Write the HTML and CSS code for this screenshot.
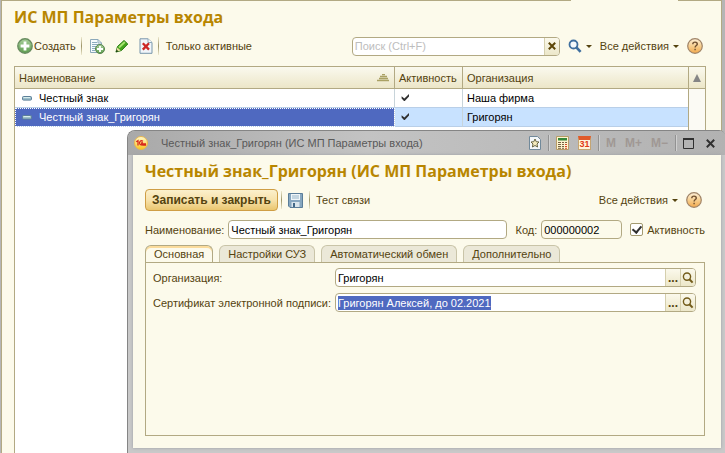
FILE: index.html
```
<!DOCTYPE html>
<html lang="ru">
<head>
<meta charset="utf-8">
<title>ИС МП Параметры входа</title>
<link rel="stylesheet" href="styles.css">
</head>
<body>
<svg class="defs" aria-hidden="true">
  <defs>
    <linearGradient id="orange" x1="0" y1="0" x2="0" y2="1"><stop offset="0" stop-color="#fdf0d8"/><stop offset=".5" stop-color="#f7cf90"/><stop offset="1" stop-color="#f3a94c"/></linearGradient>
    <linearGradient id="green" x1="0" y1="0" x2="0" y2="1"><stop offset="0" stop-color="#a9cf9c"/><stop offset="1" stop-color="#5d9e4e"/></linearGradient>
    <linearGradient id="gold" x1="0" y1="0" x2="0" y2="1"><stop offset="0" stop-color="#fffbd0"/><stop offset="1" stop-color="#f9c41c"/></linearGradient>
    <symbol id="help" viewBox="0 0 16 16"><circle cx="8" cy="8" r="7.3" fill="url(#orange)" stroke="#a08468" stroke-width="1.2"/><path d="M5.8 6.2C5.8 3.4 10.4 3.5 10.3 6.1C10.2 7.6 8.1 7.6 8.1 9.6M8.1 10.8V12.3" fill="none" stroke="#705030" stroke-width="1.4"/></symbol>
    <symbol id="check" viewBox="0 0 9 9"><path d="M.6 3.2L3.4 5.6L8 1V3.6L3.8 8H3L.6 5.6Z" fill="#303030"/></symbol>
    <symbol id="dash" viewBox="0 0 10 5"><rect x=".5" y=".5" width="9" height="3.6" rx="1" fill="#9dbfca" stroke="#5c7f98"/><path d="M1.5 1.5H8" stroke="#d7ecec"/></symbol>
    <symbol id="lens" viewBox="0 0 12 12"><circle cx="5" cy="4.6" r="3.6" fill="none" stroke="#735c1a" stroke-width="1.4"/><path d="M7.4 7.2L10.6 10.6" stroke="#735c1a" stroke-width="2"/></symbol>
  </defs>
</svg>
<main class="sheet">
  <h1>ИС МП Параметры входа</h1>
  <div class="toolbar">
    <button class="tool create"><svg width="16" height="16" viewBox="0 0 16 16"><circle cx="8" cy="8" r="7.2" fill="url(#green)" stroke="#698d60" stroke-width="1.4"/><path d="M8 3.6V12.4M3.6 8H12.4" stroke="#fff" stroke-width="2.8"/></svg>Создать</button>
    <i class="sep"></i>
    <button class="tool" aria-label="Скопировать"><svg width="16" height="16" viewBox="0 0 16 16"><path d="M1.5 1.5H9L12.5 5V14.5H1.5Z" fill="#f7fbfd" stroke="#8ca9ba"/><path d="M9 1.5V5H12.5" fill="none" stroke="#8ca9ba"/><path d="M3 4.5H8M3 6.5H10M3 8.5H9M3 10.5H7M3 12.5H6" stroke="#8cacc0"/><circle cx="11" cy="11" r="4.5" fill="url(#green)" stroke="#57824c"/><path d="M11 8V14M8 11H14" stroke="#fff" stroke-width="1.8"/></svg></button>
    <button class="tool" aria-label="Изменить"><svg width="14" height="14" viewBox="0 0 14 14"><path d="M1 13L2.5 7.5L9 1.5L12.8 5L6.5 11.5Z" fill="#44a51c" stroke="#287b14"/><path d="M4 8.5L9.8 3" stroke="#a7e46f" stroke-width="1.8"/><path d="M1 13L2.3 8.4L5.7 11.6Z" fill="#e4dc9c"/><path d="M.7 13.3L1.6 10.5L3.5 12.4Z" fill="#173f0c"/></svg></button>
    <button class="tool" aria-label="Удалить"><svg width="14" height="16" viewBox="0 0 14 16"><path d="M1 .8H9L13 4.5V15.3H1Z" fill="#f1f6fa" stroke="#7795ab"/><path d="M9 1V4.5H13" fill="#fff" stroke="#8ca9ba"/><path d="M3.8 5.2L10 11.6M10 5.2L3.8 11.6" stroke="#cc2826" stroke-width="2.3"/></svg></button>
    <i class="sep"></i>
    <button class="tool text">Только активные</button>
    <span class="grow"></span>
    <div class="field search"><input type="text" aria-label="Поиск" placeholder="Поиск (Ctrl+F)"><button class="infield" aria-label="Очистить"><svg width="8" height="8" viewBox="0 0 8 8"><path d="M.8 .8L7.2 7.2M7.2 .8L.8 7.2" stroke="#5d4608" stroke-width="2"/></svg></button></div>
    <button class="tool find" aria-label="Найти"><svg width="14" height="14" viewBox="0 0 14 14"><circle cx="5.5" cy="5.5" r="4" fill="#f5fafc" stroke="#3f6f9f" stroke-width="1.8"/><path d="M8.4 8.4L12.6 12.8" stroke="#3f6f9f" stroke-width="2.6"/></svg><i class="caret"></i></button>
    <button class="tool actions">Все действия<i class="caret"></i></button>
    <button class="tool help" aria-label="Справка"><svg width="16" height="16"><use href="#help"/></svg></button>
  </div>
  <div class="list">
    <table>
      <thead><tr><th class="name"><span>Наименование<svg width="13" height="8" viewBox="0 0 13 8"><path d="M5 .5H8M3 2.5H10M2 4.5H11M0 6.5H12" stroke="#aaa164" stroke-width="1.4"/></svg></span></th><th class="active">Активность</th><th class="org">Организация</th></tr></thead>
      <tbody>
        <tr><td class="item"><svg width="10" height="5"><use href="#dash"/></svg>Честный знак</td><td><svg width="9" height="9"><use href="#check"/></svg></td><td>Наша фирма</td></tr>
        <tr class="current"><td class="item"><svg width="10" height="5"><use href="#dash"/></svg>Честный знак_Григорян</td><td><svg width="9" height="9"><use href="#check"/></svg></td><td>Григорян</td></tr>
      </tbody>
    </table>
    <div class="scroll"><button aria-label="Вверх"><svg width="8" height="8" viewBox="0 0 8 8"><path d="M4 0L8 8H0Z" fill="#858585"/></svg></button></div>
  </div>
</main>

<section class="dialog" role="dialog" aria-labelledby="dialog-title">
  <header class="titlebar">
    <svg width="14" height="14" viewBox="0 0 14 14"><circle cx="7" cy="7" r="6.5" fill="url(#gold)" stroke="#e9b64d"/><path d="M2.2 5.8L4 4.7V9.6M9 5.2C6.5 3.8 4.8 6 5.9 8.1C6.7 9.3 8 9 12 9M8.8 6.9C7.7 6 7 7.8 8.2 7.8H12" fill="none" stroke="#d8271c" stroke-width="1.3"/></svg>
    <span class="caption">Честный знак_Григорян (ИС МП Параметры входа)</span>
    <button class="star" aria-label="В избранное"><svg width="12" height="14" viewBox="0 0 12 14"><path d="M.5 .5H8.5L11.5 3.5V13.5H.5Z" fill="#f4f7f9" stroke="#71899a"/><path d="M6 3L7.2 5.7L10 6L8 8L8.6 11L6 9.5L3.4 11L4 8L2 6L4.8 5.7Z" fill="#f5ebbd" stroke="#686544"/></svg></button>
    <i class="bar-sep"></i>
    <button aria-label="Калькулятор"><svg width="13" height="14" viewBox="0 0 13 14"><path d="M.5 .5H12.5V13.5H.5Z" fill="#fff4cf" stroke="#b79c67"/><path d="M2 2H11V4.5H2Z" fill="#36873a"/><path d="M2 6.5H5M6 6.5H8M9 6.5H11M2 8.5H5M6 8.5H8M2 10.5H5M6 10.5H8M2 12.3H5M6 12.3H8" stroke="#766344"/><path d="M9 8.5H11M9 10.5H11M9 12.3H11" stroke="#d74829"/></svg></button>
    <button aria-label="Календарь" class="calendar">31</button>
    <i class="bar-sep"></i>
    <span class="memory"><button disabled>M</button><button disabled>M+</button><button disabled>M−</button></span>
    <i class="bar-sep"></i>
    <button aria-label="Развернуть"><svg width="11" height="11" viewBox="0 0 11 11"><path d="M.5 1V10.5H10.5V1" fill="none" stroke="#303030"/><path d="M0 1H11" stroke="#303030" stroke-width="2"/></svg></button>
    <button class="close" aria-label="Закрыть"><svg width="9" height="9" viewBox="0 0 9 9"><path d="M.8 .8L8.2 8.2M8.2 .8L.8 8.2" stroke="#303030" stroke-width="2"/></svg></button>
  </header>
  <form class="form">
    <h2 id="dialog-title">Честный знак_Григорян (ИС МП Параметры входа)</h2>
    <div class="commands">
      <button type="button" class="primary">Записать и закрыть</button>
      <i class="sep"></i>
      <button type="button" class="tool" aria-label="Записать"><svg width="15" height="15" viewBox="0 0 15 15"><path d="M.5 .5H14.5V14.5H2L.5 13Z" fill="#86a6bf" stroke="#5a7d99"/><path d="M3 1H12V7H3Z" fill="#eff5f8"/><path d="M4 3H11M4 5H11" stroke="#98b5c7"/><path d="M3.5 9H11.5V14H3.5Z" fill="#d9e5ec"/><path d="M5 10H7V14H5Z" fill="#426887"/></svg></button>
      <i class="sep"></i>
      <button type="button" class="tool text">Тест связи</button>
      <span class="grow"></span>
      <button type="button" class="tool actions">Все действия<i class="caret"></i></button>
      <button type="button" class="tool help" aria-label="Справка"><svg width="16" height="16"><use href="#help"/></svg></button>
    </div>
    <div class="main-row">
      <label for="name">Наименование:</label>
      <div class="field grow"><input id="name" type="text" value="Честный знак_Григорян"></div>
      <label class="code-label" for="code">Код:</label>
      <div class="field code"><input id="code" type="text" value="000000002" readonly></div>
      <label class="tick"><input type="checkbox" checked>Активность</label>
    </div>
    <div class="tabs" role="tablist">
      <button type="button" role="tab" aria-selected="true">Основная</button>
      <button type="button" role="tab" aria-selected="false">Настройки СУЗ</button>
      <button type="button" role="tab" aria-selected="false">Автоматический обмен</button>
      <button type="button" role="tab" aria-selected="false">Дополнительно</button>
    </div>
    <div class="panel" role="tabpanel">
      <label for="org">Организация:</label>
      <div class="field"><input id="org" type="text" value="Григорян"><button type="button" class="infield dots" aria-label="Выбрать">...</button><button type="button" class="infield" aria-label="Открыть"><svg width="12" height="12"><use href="#lens"/></svg></button></div>
      <label for="cert">Сертификат электронной подписи:</label>
      <div class="field"><input id="cert" type="text" value="Григорян Алексей, до 02.2021"><button type="button" class="infield dots" aria-label="Выбрать">...</button><button type="button" class="infield" aria-label="Открыть"><svg width="12" height="12"><use href="#lens"/></svg></button></div>
    </div>
  </form>
</section>
<script src="script.js"></script>
</body>
</html>
```
FILE: styles.css
```
* { box-sizing: border-box; }
html, body { height: 100%; }
body {
  margin: 0;
  position: relative;
  overflow: hidden;
  background: #b5b5b5;
  padding: 0 3px 0 1px;
  font: 11px/14px "Liberation Sans", Arial, sans-serif;
  color: #54430f;
}
button, input { font: inherit; color: inherit; }
button { display: flex; align-items: center; background: none; border: 0; padding: 0; white-space: nowrap; }
svg { display: block; flex: none; }
.defs { position: absolute; width: 0; height: 0; }
.grow { flex: 1; min-width: 0; }

.sheet {
  position: relative;
  height: 100%;
  display: flex;
  flex-direction: column;
  background: #fcfaeb;
  border: 1px solid #b2a983;
  border-bottom: 0;
  padding: 0 15px 0 12px;
}
/* gap in the top edge under the open page tab */
.sheet::before { content: ""; position: absolute; top: -1px; right: 43px; width: 107px; height: 1px; background: #fcfaeb; }
h1, h2 {
  margin: 0;
  font: bold 16px/20px "Open Sans", "Noto Sans", sans-serif;
  color: #b88600;
  white-space: nowrap;
}
h1 { padding-top: 6px; }
.toolbar { display: flex; align-items: center; height: 18px; margin: 10px 0 11px; padding: 0 3px; }
.toolbar .create { gap: 1px; }
.sep { width: 1px; height: 18px; background: linear-gradient(#eee9cf, #9c9468, #eee9cf); margin: 0 7px 0 5px; }
.toolbar .tool + .tool { margin-left: 10px; }
.toolbar .tool + .actions, .toolbar .tool + .help { margin-left: 8px; }
.caret { width: 0; height: 0; border: 3px solid transparent; border-top-color: #54430f; border-bottom: 0; margin-left: 4px; }

.field {
  display: flex;
  height: 19px;
  border: 1px solid #b2a983;
  border-radius: 4px;
  background: #fff;
  overflow: hidden;
}
.field input { flex: 1; min-width: 0; width: 0; border: 0; padding: 0 2px; background: none; outline: 0; color: #000; }
.field input::placeholder { color: #bdbdbd; opacity: 1; }
.field input::selection { background: #4f69c0; color: #fff; }
.search { width: 208px; margin-right: 8px; }
.infield { width: 15px; justify-content: center; border-left: 1px solid #d5cfad; background: linear-gradient(#fbf9ec, #ece7c9); }
.dots { font-size: 12px; font-weight: bold; }

.list { flex: 1; display: flex; border: 1px solid #b2a983; border-bottom: 0; background: #fff; }
table { flex: 1; width: 100%; align-self: flex-start; border-collapse: separate; border-spacing: 0; table-layout: fixed; }
th { height: 22px; padding: 0 4px; text-align: left; font-weight: normal; background: linear-gradient(#faf9ee, #ece6c8); border-right: 1px solid #b2a983; border-bottom: 1px solid #b2a983; }
th:last-child, td:last-child { border-right: 0; }
th span { display: flex; justify-content: space-between; align-items: center; }
.active { width: 68px; }
.org { width: 225px; }
td { height: 19px; padding: 0 4px; color: #000; border-right: 1px solid #c8d4da; border-bottom: 1px solid #b9cfe8; }
td > svg { margin: 0 0 2px 2px; }
.item > svg { display: inline-block; vertical-align: middle; margin: 0 7px 2px 3px; }
.current td { background: #c8e2ff; }
.current .item { background: #4f69c0; color: #fff; outline: 1px dotted #fff; outline-offset: -1px; }
.scroll { width: 17px; flex: none; background: #fbfaf4; border-left: 1px solid #b2a983; }
.scroll button { width: 100%; height: 22px; justify-content: center; background: linear-gradient(#faf9ee, #ece6c8); border-bottom: 1px solid #b2a983; }

.dialog {
  position: absolute;
  left: 127px;
  right: 0;
  top: 130px;
  bottom: 0;
  display: flex;
  flex-direction: column;
  padding: 0 4px 5px 5px;
  background: #c9c9c9;
  border: 1px solid #858585;
  border-width: 1px 0 0 1px;
  border-radius: 8px 6px 0 0;
}
.titlebar {
  display: flex;
  align-items: center;
  height: 24px;
  margin: 0 -4px 0 -5px;
  padding: 0 10px 0 6px;
  border-radius: 7px 5px 0 0;
  background: linear-gradient(90deg, #a9a9a9, #c3c3c3 40%, #b2b2b2);
  color: #595959;
}
.caption { flex: 1; margin-left: 13px; white-space: nowrap; }
.bar-sep { width: 2px; height: 16px; margin: 0 6px 0 7px; border-left: 1px solid #929292; border-right: 1px solid #d0d0d0; }
.calendar { width: 13px; height: 14px; margin-left: 9px; justify-content: center; background: #fff5dc; border: 1px solid #c4a574; border-top: 4px solid #e05a2a; color: #e03b18; font: bold 9px/9px "Liberation Sans", sans-serif; }
.memory { display: flex; gap: 9px; color: #a09894; font-size: 12px; font-weight: bold; }
.close { margin-left: 12px; }

.form { flex: 1; display: flex; flex-direction: column; background: #fcfaeb; padding: 6px 16px 12px 12px; box-shadow: 0 0 3px #9b9fa3; }
.commands { display: flex; align-items: center; height: 22px; margin: 8px 0 9px; padding-right: 3px; }
.commands .sep { margin: 0 6px 0 3px; }
.commands .tool + .sep { margin: 0 6px; }
.commands .actions { margin-right: 8px; }
.primary { height: 22px; padding: 0 6px; border: 1px solid #cf9e45; border-radius: 4px; background: linear-gradient(#fbf0cc, #f7e2ab 50%, #eac66f); color: #54430f; font-size: 12px; font-weight: bold; }
.main-row { display: flex; align-items: center; }
.main-row label { white-space: nowrap; margin-right: 4px; }
.main-row .code-label { margin-left: 8px; }
.code { width: 81px; background: #fcfaeb; }
.main-row .tick { display: flex; align-items: center; gap: 4px; margin: 0 0 0 8px; }
.tick input { appearance: none; width: 13px; height: 13px; margin: 0; border: 1px solid #a39a70; border-radius: 2px; background: #fff; display: grid; place-items: center; }
.tick input:checked::before { content: ""; width: 4px; height: 7px; border: solid #303030; border-width: 0 2px 2px 0; transform: rotate(40deg); margin-bottom: 2px; }

.tabs { display: flex; gap: 6px; margin: 6px 0 -1px; }
.tabs button { height: 18px; padding: 0 8px; background: #ebe8d8; border: 1px solid #c9c4a8; border-bottom-color: #b2a983; border-radius: 6px 6px 0 0; }
.tabs [aria-selected="true"] { background: #fcfaeb; border-color: #b2a983; border-bottom-color: #fcfaeb; box-shadow: inset 0 2px #fbdc9c; }
.panel { flex: 1; display: grid; grid-template-columns: auto 1fr; gap: 6px 4px; align-content: start; align-items: center; border: 1px solid #b2a983; padding: 5px 8px 5px 7px; }
```
FILE: script.js
```
const cert = document.getElementById("cert");
cert.focus();
cert.select();
```
